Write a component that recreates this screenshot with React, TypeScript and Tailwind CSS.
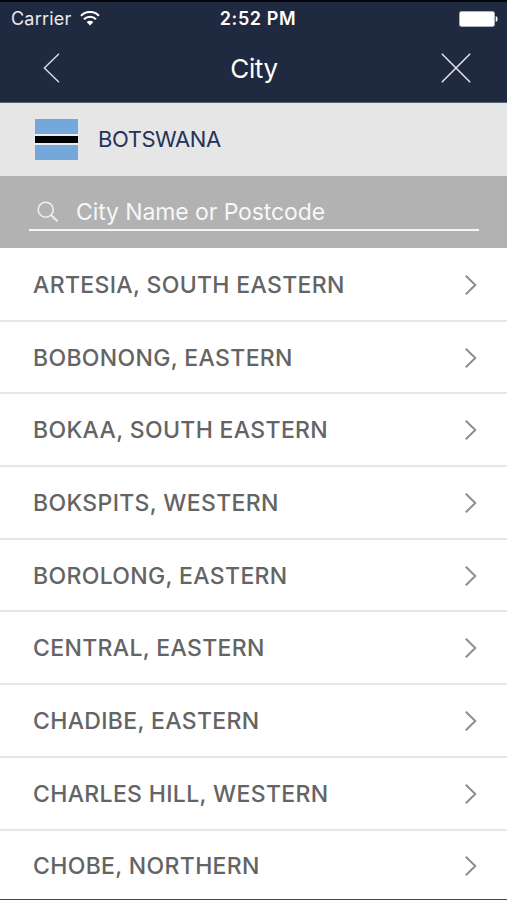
const cities = [
  'ARTESIA, SOUTH EASTERN',
  'BOBONONG, EASTERN',
  'BOKAA, SOUTH EASTERN',
  'BOKSPITS, WESTERN',
  'BOROLONG, EASTERN',
  'CENTRAL, EASTERN',
  'CHADIBE, EASTERN',
  'CHARLES HILL, WESTERN',
  'CHOBE, NORTHERN',
]

function StatusBar() {
  return (
    <div className="grid h-[32px] grid-cols-3 items-center pl-[11px] pr-[9px] pt-px text-[18px] leading-none">
      <div className="flex items-center gap-[9px]">
        <span className="tracking-[0.2px] text-[#e6eaf0]">Carrier</span>
        <svg className="h-[15px] w-[20px]" viewBox="0 0 20 15" fill="none" stroke="white" strokeWidth="2.2">
          <path d="M1 4.7C6 -0.3 14 -0.3 19 4.7" />
          <path d="M4 8.3C7.4 4.9 12.6 4.9 16 8.3" />
          <path d="M6.6 11C8.6 9.2 11.4 9.2 13.4 11L10 14.6Z" fill="white" stroke="none" />
        </svg>
      </div>
      <span className="pl-[7px] text-center font-semibold tracking-[0.6px]">2:52 PM</span>
      <svg className="h-[16px] w-[39px] justify-self-end" viewBox="0 0 39 16">
        <rect x="0.5" y="0.5" width="35" height="15" rx="2" fill="white" stroke="#aab1bf" />
        <path d="M36.7 5C39.2 5.6 39.2 10.4 36.7 11Z" fill="white" />
      </svg>
    </div>
  )
}

function NavBar() {
  return (
    <div className="flex h-[68px] items-center justify-between pl-[43px] pr-[36px]">
      <svg className="h-[30px] w-[31px]" viewBox="0 0 31 30" fill="none" stroke="#d5d9e0" strokeWidth="1.5">
        <path d="M16 0.8L1.4 15L16 29.2" />
      </svg>
      <h1 className="pr-[7px] pt-[2px] text-[26px] leading-none tracking-[-0.4px]">City</h1>
      <svg className="h-[30px] w-[30px]" viewBox="0 0 30 30" fill="none" stroke="#e2e5ea" strokeWidth="1.5">
        <path d="M0.8 0.8L29.2 29.2M29.2 0.8L0.8 29.2" />
      </svg>
    </div>
  )
}

function BotswanaFlag() {
  return (
    <div className="flex h-[41px] w-[43px] flex-col">
      <div className="flex-1 bg-[#74a8db]" />
      <div className="h-[11px] border-y-2 border-[#e8eef4] bg-black" />
      <div className="flex-1 bg-[#74a8db]" />
    </div>
  )
}

function CityRow({ name }: { name: string }) {
  return (
    <li className="flex h-[72.7px] items-center justify-between border-b-2 border-[#e7e7e7] pl-[33px] pr-[30px] pt-[2px]">
      <span className="text-[23px] font-medium leading-none tracking-[0.34px] text-[#646464]">{name}</span>
      <svg className="mb-px h-[20px] w-[12px]" viewBox="0 0 12 20" fill="none" stroke="#8e8e8e" strokeWidth="2">
        <path d="M0.8 0.7L10.3 10L0.8 19.3" />
      </svg>
    </li>
  )
}

export default function App() {
  return (
    <div className="h-[900px] w-[507px] overflow-hidden border-b border-[#444] bg-white font-['Inter',sans-serif]">
      <header className="h-[103px] border-b border-t-2 border-b-[#596472] border-t-[#05070c] bg-[#1f2a40] text-white">
        <StatusBar />
        <NavBar />
      </header>
      <div className="flex h-[73px] items-center gap-[20px] bg-[#e6e6e6] pl-[35px]">
        <BotswanaFlag />
        <span className="pb-[2px] text-[22px] leading-none tracking-[-0.45px] text-[#25325a]">BOTSWANA</span>
      </div>
      <div className="h-[72px] bg-[#b2b2b2] pl-[29px] pr-[28px] pt-[17px]">
        <div className="flex h-[38px] items-center gap-[17px] border-b-2 border-[#f5f5f5] pl-[8px] pt-px">
          <svg className="h-[22px] w-[22px]" viewBox="0 0 22 22" fill="none" stroke="#f0f0f0">
            <circle cx="8.7" cy="8.7" r="7.5" strokeWidth="1.5" />
            <path d="M14 14L20.6 20.4" strokeWidth="2" />
          </svg>
          <span className="pt-[2px] text-[23px] leading-none tracking-[-0.1px] text-[#f7f7f7]">City Name or Postcode</span>
        </div>
      </div>
      <ul className="pt-px">
        {cities.map((name) => (
          <CityRow key={name} name={name} />
        ))}
      </ul>
    </div>
  )
}
